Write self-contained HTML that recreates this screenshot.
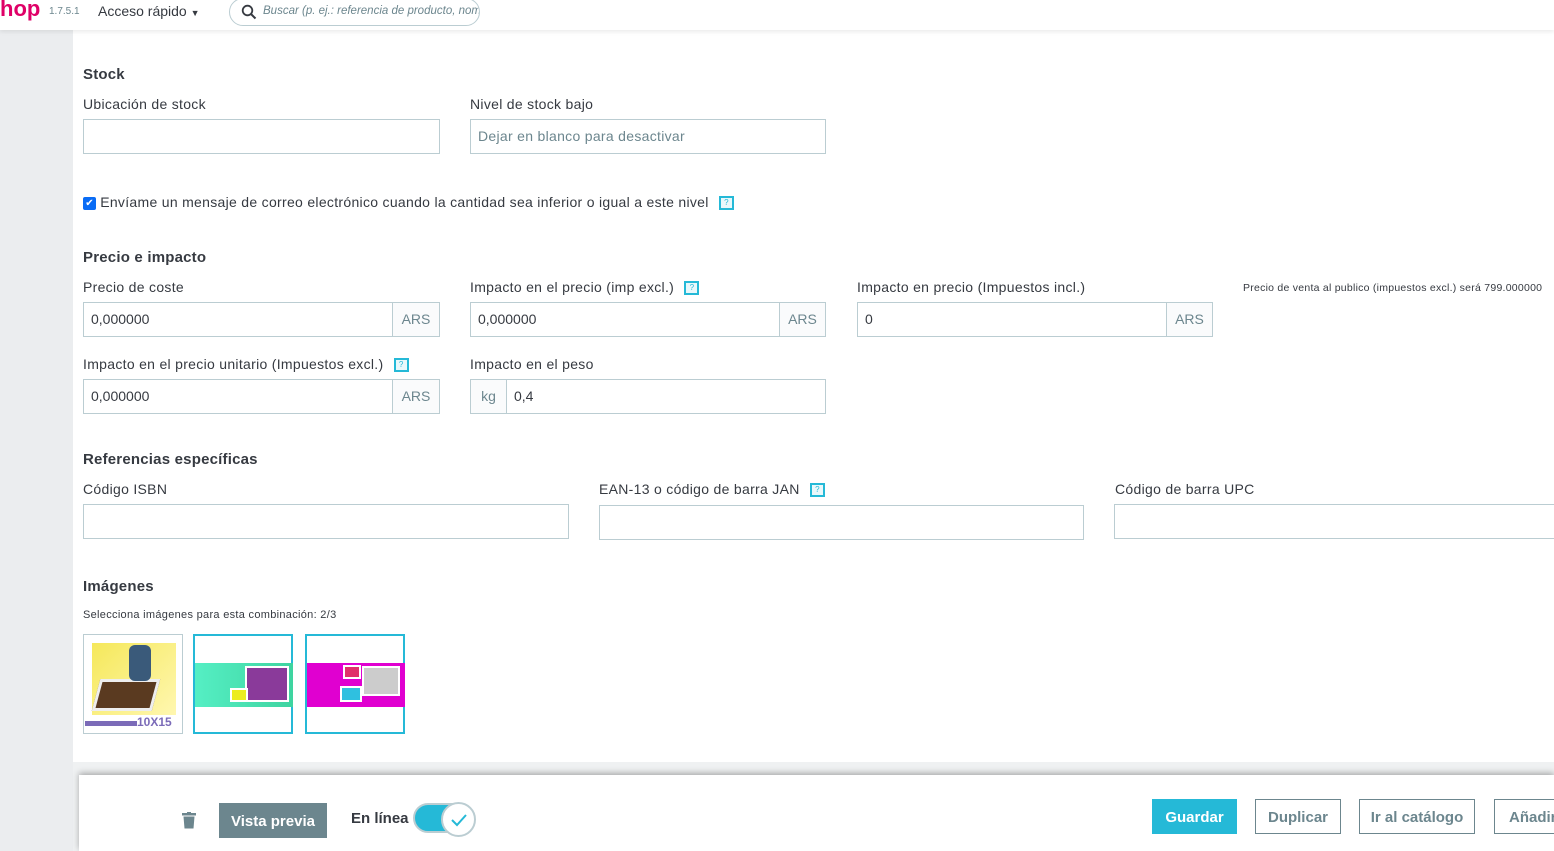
<!DOCTYPE html>
<html><head><meta charset="utf-8">
<style>
*{box-sizing:border-box;margin:0;padding:0}
body{width:1554px;height:851px;overflow:hidden;background:#eff1f2;font-family:"Liberation Sans",sans-serif;color:#363a41;font-size:14px;position:relative}
.abs{position:absolute}
#hdr{left:0;top:0;width:1554px;height:30px;background:#fff;box-shadow:0 2px 4px rgba(0,0,0,.08);z-index:3}
#side{left:0;top:30px;width:73px;height:821px;background:#ebedef}
#main{left:73px;top:30px;width:1481px;height:732px;background:#fff}
h3{position:absolute;font-size:15px;font-weight:bold;color:#363a41;letter-spacing:.2px}
.lbl{position:absolute;font-size:14px;color:#363a41;white-space:nowrap;letter-spacing:.3px}
.inp{position:absolute;height:35px;border:1px solid #bbcdd2;background:#fff;font-size:14px;padding-left:7px;line-height:33px;color:#363a41}
.add{position:absolute;top:-1px;height:35px;border:1px solid #bbcdd2;background:#fafbfc;color:#6c868e;text-align:center;line-height:33px;font-size:14px}
.q{display:inline-block;width:15px;height:14px;border:2px solid #25b9d7;color:#25b9d7;font-size:8px;line-height:10px;text-align:center;vertical-align:middle;margin-left:6px;background:#e9f8fb;letter-spacing:0}
.img{position:absolute;top:634px;width:100px;height:100px;background:#fff}
#foot{left:79px;top:775px;width:1475px;height:76px;background:#fff;box-shadow:0 -2px 6px rgba(0,0,0,.3)}
.btn{position:absolute;height:35px;border:1px solid #6c868e;color:#6c868e;font-weight:bold;font-size:15px;line-height:33px;text-align:center;background:#fff}
</style></head><body>
<div id="hdr" class="abs">
 <span class="abs" style="left:0;top:-4px;font-size:22px;font-weight:bold;color:#df0067">hop</span>
 <span class="abs" style="left:49px;top:6px;font-size:10px;color:#6c868e">1.7.5.1</span>
 <span class="abs" style="left:98px;top:3px;font-size:14px;color:#363a41">Acceso rápido <span style="font-size:9px">▼</span></span>
 <div class="abs" style="left:229px;top:-2px;width:251px;height:28px;border:1px solid #bbcdd2;border-radius:14px;overflow:hidden">
  <svg class="abs" style="left:11px;top:5px" width="16" height="16" viewBox="0 0 16 16"><circle cx="6.5" cy="6.5" r="4.8" fill="none" stroke="#363a41" stroke-width="1.8"/><path d="M10 10l4.5 4.5" stroke="#363a41" stroke-width="2"/></svg>
  <span class="abs" style="left:33px;top:6px;font-size:11.5px;font-style:italic;color:#6c868e;white-space:nowrap">Buscar (p. ej.: referencia de producto, nombre</span>
 </div>
</div>
<div id="side" class="abs"></div>
<div id="main" class="abs"></div>

<h3 style="left:83px;top:66px">Stock</h3>
<div class="lbl" style="left:83px;top:96px">Ubicación de stock</div>
<div class="inp" style="left:83px;top:119px;width:357px"></div>
<div class="lbl" style="left:470px;top:96px">Nivel de stock bajo</div>
<div class="inp" style="left:470px;top:119px;width:356px;color:#6c868e;letter-spacing:.3px">Dejar en blanco para desactivar</div>

<div class="lbl" style="left:83px;top:194px"><span style="display:inline-block;width:13px;height:13px;background:#0a6cf5;border-radius:2px;color:#fff;font-size:10px;line-height:13px;text-align:center;vertical-align:1px;letter-spacing:0">✔</span> Envíame un mensaje de correo electrónico cuando la cantidad sea inferior o igual a este nivel <span class="q">?</span></div>

<h3 style="left:83px;top:249px">Precio e impacto</h3>
<div class="lbl" style="left:83px;top:279px">Precio de coste</div>
<div class="inp" style="left:83px;top:302px;width:357px">0,000000<div class="add" style="left:308px;width:48px">ARS</div></div>
<div class="lbl" style="left:470px;top:279px">Impacto en el precio (imp excl.) <span class="q">?</span></div>
<div class="inp" style="left:470px;top:302px;width:356px">0,000000<div class="add" style="left:308px;width:47px">ARS</div></div>
<div class="lbl" style="left:857px;top:279px">Impacto en precio (Impuestos incl.)</div>
<div class="inp" style="left:857px;top:302px;width:356px">0<div class="add" style="left:308px;width:47px">ARS</div></div>
<div class="lbl" style="left:1243px;top:282px;font-size:10.5px;letter-spacing:.25px">Precio de venta al publico (impuestos excl.) será 799.000000</div>

<div class="lbl" style="left:83px;top:356px">Impacto en el precio unitario (Impuestos excl.) <span class="q">?</span></div>
<div class="inp" style="left:83px;top:379px;width:357px">0,000000<div class="add" style="left:308px;width:48px">ARS</div></div>
<div class="lbl" style="left:470px;top:356px">Impacto en el peso</div>
<div class="inp" style="left:470px;top:379px;width:356px;padding-left:43px">0,4<div class="add" style="left:-1px;width:37px">kg</div></div>

<h3 style="left:83px;top:451px">Referencias específicas</h3>
<div class="lbl" style="left:83px;top:481px">Código ISBN</div>
<div class="inp" style="left:83px;top:504px;width:486px"></div>
<div class="lbl" style="left:599px;top:481px">EAN-13 o código de barra JAN <span class="q">?</span></div>
<div class="inp" style="left:599px;top:505px;width:485px"></div>
<div class="lbl" style="left:1115px;top:481px">Código de barra UPC</div>
<div class="inp" style="left:1114px;top:504px;width:450px"></div>

<h3 style="left:83px;top:578px">Imágenes</h3>
<div class="lbl" style="left:83px;top:609px;font-size:11px">Selecciona imágenes para esta combinación: 2/3</div>
<div class="img" style="left:83px;border:1px solid #bbcdd2;overflow:hidden">
 <div class="abs" style="left:8px;top:8px;width:84px;height:72px;background:linear-gradient(135deg,#f5e85a,#fff7b0)"></div>
 <div class="abs" style="left:12px;top:44px;width:60px;height:32px;background:#5a3a20;transform:skew(-15deg);border:3px solid #eee"></div>
 <div class="abs" style="left:45px;top:10px;width:22px;height:36px;background:#3a5a7a;border-radius:6px"></div>
 <div class="abs" style="left:1px;top:86px;width:52px;height:5px;background:#7b6bb8"></div>
 <span class="abs" style="left:53px;top:80px;font-size:12px;font-weight:bold;color:#7b6bb8">10X15</span>
</div>
<div class="img" style="left:193px;border:2px solid #25b9d7">
 <div class="abs" style="left:0;top:27px;width:98px;height:44px;background:linear-gradient(90deg,#55efc4,#3ed4a0)"></div>
 <div class="abs" style="left:50px;top:30px;width:44px;height:36px;background:#8a3a9a;border:2px solid #fff"></div>
 <div class="abs" style="left:35px;top:52px;width:18px;height:14px;background:#ecec20;border:2px solid #fff"></div>
</div>
<div class="img" style="left:305px;border:2px solid #25b9d7">
 <div class="abs" style="left:0;top:27px;width:98px;height:44px;background:#e000d0"></div>
 <div class="abs" style="left:55px;top:30px;width:38px;height:30px;background:#ccc;border:2px solid #fff"></div>
 <div class="abs" style="left:33px;top:50px;width:22px;height:16px;background:#2fc0e0;border:2px solid #fff"></div>
 <div class="abs" style="left:36px;top:29px;width:18px;height:14px;background:#e0306a;border:2px solid #fff"></div>
</div>

<div id="foot" class="abs">
 <svg class="abs" style="left:103px;top:37px" width="14" height="17" viewBox="0 0 14 17"><rect x="0" y="1" width="14" height="2.5" fill="#6c868e"/><rect x="5" y="0" width="4" height="2" fill="#6c868e"/><path d="M1.5 4.5h11l-1 12h-9z" fill="#6c868e"/></svg>
 <div class="abs" style="left:140px;top:28px;width:108px;height:35px;background:#6c868e;color:#fff;font-weight:bold;font-size:15px;line-height:37px;text-align:center">Vista previa</div>
 <span class="abs" style="left:272px;top:35px;font-weight:bold;font-size:15px;color:#363a41">En línea</span>
 <div class="abs" style="left:334px;top:28px;width:60px;height:30px;border-radius:15px;background:#25b9d7;border:2px solid #bbcdd2"></div>
 <div class="abs" style="left:362px;top:27px;width:35px;height:35px;border-radius:50%;background:#fff;border:2px solid #bbcdd2"><svg width="31" height="31" viewBox="0 0 31 31"><path d="M9 16l5 5 9-10" fill="none" stroke="#25b9d7" stroke-width="2"/></svg></div>
 <div class="abs" style="left:1073px;top:24px;width:85px;height:35px;background:#25b9d7;color:#fff;font-weight:bold;font-size:15px;line-height:37px;text-align:center">Guardar</div>
 <div class="btn" style="left:1176px;top:24px;width:86px;line-height:35px">Duplicar</div>
 <div class="btn" style="left:1280px;top:24px;width:116px;line-height:35px">Ir al catálogo</div>
 <div class="btn" style="left:1415px;top:24px;width:80px;text-align:left;padding-left:14px;line-height:35px">Añadir</div>
</div>
</body></html>
